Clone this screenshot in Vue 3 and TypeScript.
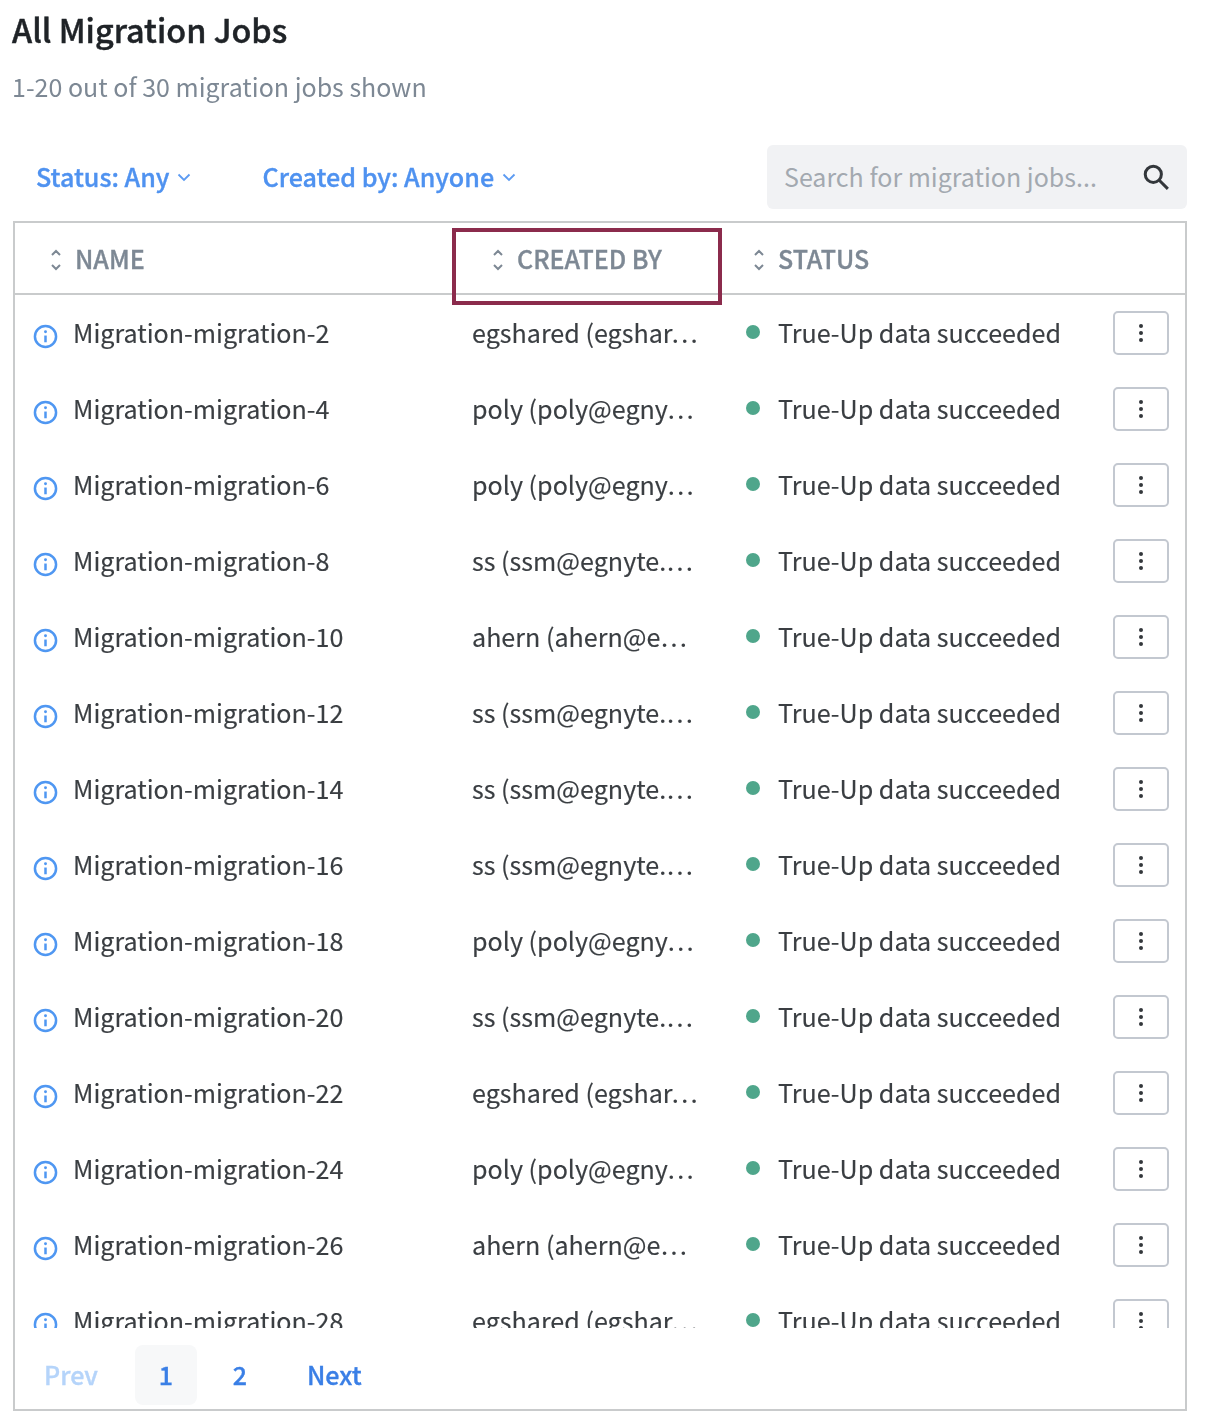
<script setup lang="ts">
interface Job { name: string; by: string }
const jobs: Job[] = [
  { name: 'Migration-migration-2', by: 'egshared (egshar…' },
  { name: 'Migration-migration-4', by: 'poly (poly@egny…' },
  { name: 'Migration-migration-6', by: 'poly (poly@egny…' },
  { name: 'Migration-migration-8', by: 'ss (ssm@egnyte.…' },
  { name: 'Migration-migration-10', by: 'ahern (ahern@e…' },
  { name: 'Migration-migration-12', by: 'ss (ssm@egnyte.…' },
  { name: 'Migration-migration-14', by: 'ss (ssm@egnyte.…' },
  { name: 'Migration-migration-16', by: 'ss (ssm@egnyte.…' },
  { name: 'Migration-migration-18', by: 'poly (poly@egny…' },
  { name: 'Migration-migration-20', by: 'ss (ssm@egnyte.…' },
  { name: 'Migration-migration-22', by: 'egshared (egshar…' },
  { name: 'Migration-migration-24', by: 'poly (poly@egny…' },
  { name: 'Migration-migration-26', by: 'ahern (ahern@e…' },
  { name: 'Migration-migration-28', by: 'egshared (egshar…' },
]
const columns = [
  { label: 'NAME', cls: 'h-name' },
  { label: 'CREATED BY', cls: 'h-by' },
  { label: 'STATUS', cls: 'h-status' },
]
</script>

<template>
  <main class="page">
    <h1 class="title">All Migration Jobs</h1>
    <p class="subtitle">1-20 out of 30 migration jobs shown</p>

    <div class="toolbar">
      <button class="filter f-status"><span class="flabel">Status: Any</span>
        <svg class="chev" viewBox="0 0 14 9"><path d="M1.5 1.5 7 7l5.5-5.5" /></svg>
      </button>
      <button class="filter f-by"><span class="flabel">Created by: Anyone</span>
        <svg class="chev" viewBox="0 0 14 9"><path d="M1.5 1.5 7 7l5.5-5.5" /></svg>
      </button>
      <div class="search">
        <span class="placeholder">Search for migration jobs...</span>
        <svg class="mag" viewBox="0 0 26 26"><circle cx="10.5" cy="10.5" r="7.5" /><path d="m16 16 8 8" /></svg>
      </div>
    </div>

    <section class="table">
      <header class="head grid">
        <div v-for="c in columns" :key="c.label" class="th" :class="c.cls">
          <svg class="sort" viewBox="0 0 14 26"><path d="M3 8l4-4 4 4M3 18l4 4 4-4" /></svg>
          <span class="th-label">{{ c.label }}</span>
        </div>
        <div class="highlight"></div>
      </header>

      <div class="rows">
        <div v-for="j in jobs" :key="j.name" class="row grid">
          <div class="cell c-name">
            <svg class="info" viewBox="0 0 26 26">
              <circle cx="13" cy="13" r="11" />
              <path d="M13 12v7" />
              <circle class="dot-i" cx="13" cy="8" r="1.5" />
            </svg>
            <span class="txt">{{ j.name }}</span>
          </div>
          <div class="cell c-by"><span class="txt">{{ j.by }}</span></div>
          <div class="cell c-status">
            <i class="dot"></i>
            <span class="txt status-text">True-Up data succeeded</span>
            <button class="kebab"><i></i><i></i><i></i></button>
          </div>
        </div>
      </div>

      <nav class="pager">
        <span class="pg prev">Prev</span>
        <span class="pg num active">1</span>
        <span class="pg num">2</span>
        <span class="pg next">Next</span>
      </nav>
    </section>
  </main>
</template>

<style>
html, body { margin: 0; background: #fff; }
</style>

<style scoped>
.page {
  width: 1224px;
  height: 1428px;
  box-sizing: border-box;
  padding: 7px 37px 0 13px;
  font-family: "Noto Sans CJK SC", "Noto Sans", sans-serif;
  color: #3a3e42;
  overflow: hidden;
  filter: blur(0.45px);
}
.title {
  margin: 0 0 0 -1px;
  font-size: 32.4px;
  line-height: 44px;
  font-weight: 500;
  color: #1f2327;
  -webkit-text-stroke: 0.45px #1f2327;
}
.subtitle {
  margin: 13px 0 0 -1px;
  font-size: 25px;
  line-height: 44px;
  color: #7d8894;
}
.toolbar {
  display: flex;
  align-items: center;
  height: 64px;
  margin-top: 37px;
}
.filter {
  display: flex;
  align-items: center;
  gap: 8px;
  border: 0;
  padding: 0;
  background: none;
  font: 500 25.1px "Noto Sans CJK SC", "Noto Sans", sans-serif;
  color: #4f92f0;
  -webkit-text-stroke: 0.35px #4f92f0;
}
.flabel { margin-bottom: 2px; }
.f-status { margin-left: 23px; }
.f-by { margin-left: 71px; }
.chev { width: 14px; height: 9px; fill: none; stroke: #5c9bf2; stroke-width: 1.8; }
.search {
  margin-left: auto;
  width: 420px;
  height: 64px;
  box-sizing: border-box;
  padding: 0 17px;
  display: flex;
  align-items: center;
  justify-content: space-between;
  background: #f1f2f4;
  border-radius: 6px;
}
.placeholder { font-size: 25px; color: #a3a9b0; margin-bottom: 2px; }
.mag { width: 28px; height: 28px; fill: none; stroke: #33373b; stroke-width: 2.8; }
.table {
  margin-top: 12px;
  height: 1190px;
  box-sizing: border-box;
  border: 2px solid #c9cbcc;
  display: flex;
  flex-direction: column;
}
.grid { display: grid; grid-template-columns: 438px 275px 1fr; }
.head {
  position: relative;
  height: 70px;
  flex: none;
  border-bottom: 2px solid #c9cbcc;
  box-sizing: content-box;
}
.th {
  display: flex;
  align-items: center;
  gap: 12px;
  font-size: 25px;
  font-weight: 500;
  color: #7d8894;
  -webkit-text-stroke: 0.35px #7d8894;
}
.th-label { margin-bottom: 1px; }
.h-name { padding-left: 34px; }
.h-by { padding-left: 38px; }
.h-status { padding-left: 24px; }
.sort { width: 14px; height: 26px; fill: none; stroke: #7d8894; stroke-width: 2; margin-top: 4px; }
.highlight {
  position: absolute;
  left: 437px;
  top: 5px;
  width: 270px;
  height: 77px;
  box-sizing: border-box;
  border: 4px solid #8b2b4c;
}
.rows {
  height: 1033px;
  flex: none;
  overflow: hidden;
}
.row { height: 76px; align-items: center; font-size: 25.1px; }
.cell { display: flex; align-items: center; white-space: nowrap; }
.txt { margin-bottom: 2px; -webkit-text-stroke: 0.15px #3a3e42; }
.c-name { padding-left: 18px; gap: 15px; }
.c-by { padding-left: 19px; }
.c-status { padding: 0 16px 0 19px; }
.info { width: 25px; height: 25px; fill: none; stroke: #4f97f2; stroke-width: 2.6; margin-top: 6px; }
.dot-i { fill: #4f97f2; stroke: none; }
.dot { width: 14px; height: 14px; border-radius: 50%; background: #4fa68b; flex: none; margin: 0 0 2px -1px; }
.status-text { margin-left: 18px; }
.kebab {
  margin-left: auto;
  width: 56px;
  height: 44px;
  box-sizing: border-box;
  border: 2px solid #c3c8d0;
  border-radius: 5px;
  background: #fff;
  padding: 0;
  display: flex;
  flex-direction: column;
  align-items: center;
  justify-content: center;
  gap: 3px;
}
.kebab i { width: 4px; height: 4px; border-radius: 50%; background: #33373b; }
.pager {
  flex: 1;
  display: flex;
  align-items: center;
  padding: 13px 0 0 30px;
  font-size: 25px;
  font-weight: 500;
  color: #3a7fe6;
  -webkit-text-stroke: 0.35px #3a7fe6;
}
.pg { display: flex; align-items: center; justify-content: center; padding-bottom: 2px; box-sizing: border-box; }
.prev { color: #b5d4fa; width: 54px; margin-left: -1px; -webkit-text-stroke: 0.35px #b5d4fa; }
.num { width: 62px; height: 60px; border-radius: 8px; margin-left: 37px; }
.num + .num { margin-left: 12px; }
.active { background: #f7f8f9; }
.next { margin-left: 36px; }
</style>
